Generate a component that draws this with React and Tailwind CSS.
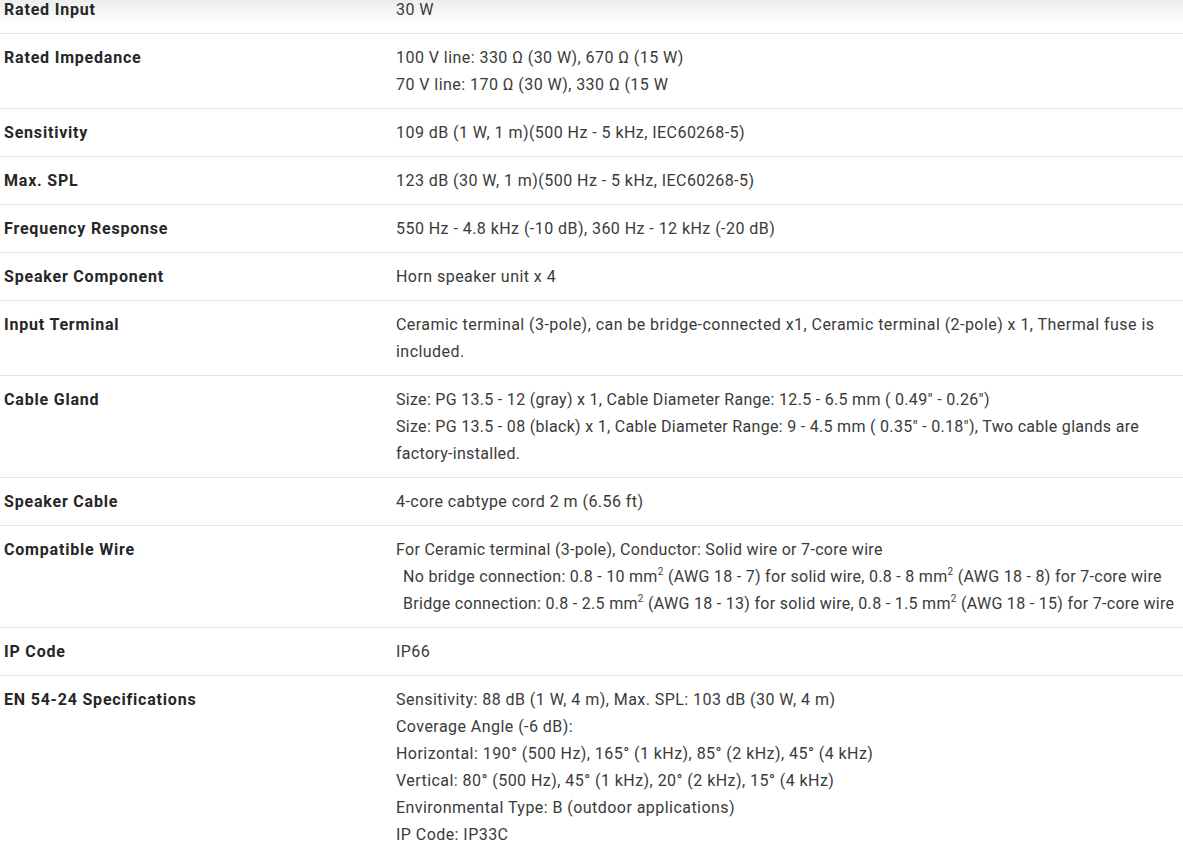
import React from 'react';

const sup = (t) => <sup className="text-[10px] relative -top-[1px] align-super leading-none">{t}</sup>;

const rows = [
  { label: 'Rated Input', lines: ['30 W'] },
  {
    label: 'Rated Impedance',
    lines: ['100 V line: 330 Ω (30 W), 670 Ω (15 W)', '70 V line: 170 Ω (30 W), 330 Ω (15 W'],
  },
  { label: 'Sensitivity', lines: ['109 dB (1 W, 1 m)(500 Hz - 5 kHz, IEC60268-5)'] },
  { label: 'Max. SPL', lines: ['123 dB (30 W, 1 m)(500 Hz - 5 kHz, IEC60268-5)'] },
  { label: 'Frequency Response', lines: ['550 Hz - 4.8 kHz (-10 dB), 360 Hz - 12 kHz (-20 dB)'] },
  { label: 'Speaker Component', lines: ['Horn speaker unit x 4'] },
  {
    label: 'Input Terminal',
    lines: [
      'Ceramic terminal (3-pole), can be bridge-connected x1, Ceramic terminal (2-pole) x 1, Thermal fuse is included.',
    ],
  },
  {
    label: 'Cable Gland',
    narrow: true,
    lines: [
      'Size: PG 13.5 - 12 (gray) x 1, Cable Diameter Range: 12.5 - 6.5 mm ( 0.49" - 0.26")',
      'Size: PG 13.5 - 08 (black) x 1, Cable Diameter Range: 9 - 4.5 mm ( 0.35" - 0.18"), Two cable glands are factory-installed.',
    ],
  },
  { label: 'Speaker Cable', lines: ['4-core cabtype cord 2 m (6.56 ft)'] },
  {
    label: 'Compatible Wire',
    narrow: true,
    lines: [
      'For Ceramic terminal (3-pole), Conductor: Solid wire or 7-core wire',
      <span className="pl-[7px] whitespace-nowrap">
        No bridge connection: 0.8 - 10 mm{sup('2')} (AWG 18 - 7) for solid wire, 0.8 - 8 mm{sup('2')} (AWG 18 - 8) for 7-core wire
      </span>,
      <span className="pl-[7px] whitespace-nowrap">
        Bridge connection: 0.8 - 2.5 mm{sup('2')} (AWG 18 - 13) for solid wire, 0.8 - 1.5 mm{sup('2')} (AWG 18 - 15) for 7-core wire
      </span>,
    ],
  },
  { label: 'IP Code', lines: ['IP66'] },
  {
    label: 'EN 54-24 Specifications',
    lines: [
      'Sensitivity: 88 dB (1 W, 4 m), Max. SPL: 103 dB (30 W, 4 m)',
      'Coverage Angle (-6 dB):',
      'Horizontal: 190° (500 Hz), 165° (1 kHz), 85° (2 kHz), 45° (4 kHz)',
      'Vertical: 80° (500 Hz), 45° (1 kHz), 20° (2 kHz), 15° (4 kHz)',
      'Environmental Type: B (outdoor applications)',
      'IP Code: IP33C',
    ],
  },
];

export default function App() {
  return (
    <div
      className="relative h-[856px] overflow-hidden bg-white text-[16px] leading-[27px]"
      style={{ fontFamily: 'Roboto, "Liberation Sans", sans-serif' }}
    >
      {/* soft shade under the sticky header */}
      <div className="pointer-events-none absolute inset-x-0 top-0 h-6 bg-gradient-to-b from-[#ededed] to-white" />
      <div className="relative -mt-[14px]">
        {rows.map((row) => (
          <div key={row.label} className="flex border-b border-[#e3e3e3]">
            <div className="w-[396px] shrink-0 pl-1 pr-4 py-[10px] font-bold tracking-[0.8px] text-[#262626]">
              {row.label}
            </div>
            <div
              className={
                'flex-1 pr-1 py-[10px] text-[#3a3a3a] ' +
                (row.narrow ? 'tracking-[0.3px]' : 'tracking-[0.45px]')
              }
            >
              {row.lines.map((l, i) => (
                <div key={i}>{l}</div>
              ))}
            </div>
          </div>
        ))}
      </div>
    </div>
  );
}
